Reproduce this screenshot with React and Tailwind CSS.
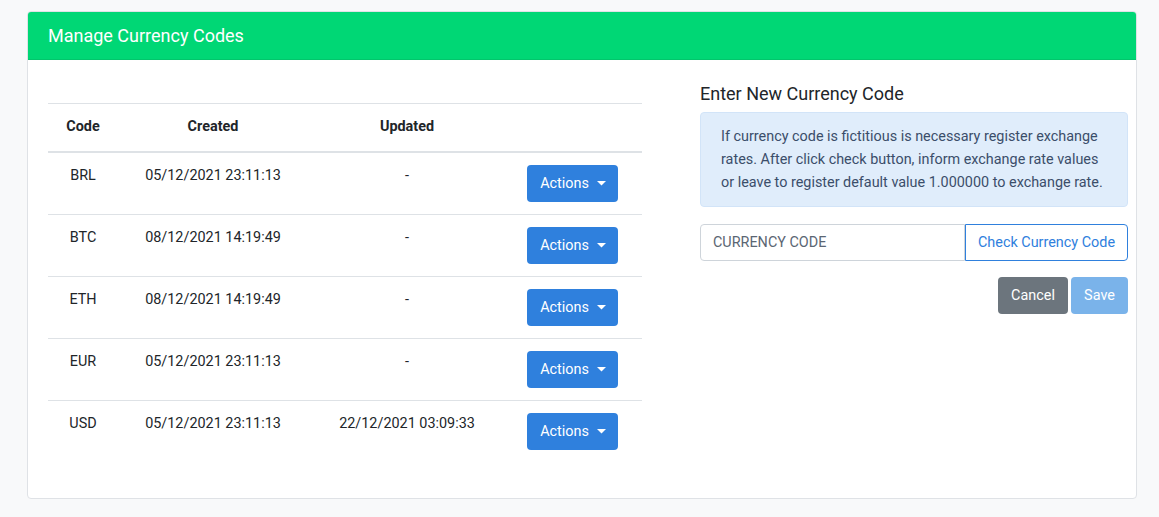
import React from "react";

const rows = [
  ["BRL", "05/12/2021 23:11:13", "-"],
  ["BTC", "08/12/2021 14:19:49", "-"],
  ["ETH", "08/12/2021 14:19:49", "-"],
  ["EUR", "05/12/2021 23:11:13", "-"],
  ["USD", "05/12/2021 23:11:13", "22/12/2021 03:09:33"],
];

function Caret() {
  return (
    <svg width="9" height="5" viewBox="0 0 9 5" className="ml-[8px]">
      <path d="M0 0 L9 0 L4.5 4.5 Z" fill="white" />
    </svg>
  );
}

export default function App() {
  return (
    <div
      className="min-h-[517px] w-full bg-[#f8f9fa] pt-[11px] pl-[27px] pr-[22px] text-[#212529]"
      style={{ fontFamily: "Roboto, 'Liberation Sans', sans-serif" }}
    >
      <div className="w-[1110px] h-[488px] bg-white border border-[#dfe2e6] rounded-[4px] overflow-hidden">
        <div className="h-[48px] bg-[#00d775] border-b border-[#02c56c] flex items-center pl-[20px]">
          <span className="text-white text-[18px] leading-none">Manage Currency Codes</span>
        </div>
        <div className="flex pl-[20px] pt-[23px]">
          <div className="w-[594px] pt-[20px]">
            <div className="grid grid-cols-[70px_190px_198px_136px] h-[50px] border-t border-[#dee2e6] border-b-2 border-b-[#dee2e6] items-center pb-[1px] text-[14.4px] font-bold">
              <div className="text-center">Code</div>
              <div className="text-center">Created</div>
              <div className="text-center">Updated</div>
              <div></div>
            </div>
            {rows.map((r, i) => (
              <div
                key={r[0]}
                className={`grid grid-cols-[70px_190px_198px_136px] h-[62px] text-[14.4px] border-b ${i < rows.length - 1 ? "border-[#dee2e6]" : "border-transparent"}`}
              >
                <div className="text-center pt-[12px] leading-[21px]">{r[0]}</div>
                <div className="text-center pt-[12px] leading-[21px]">{r[1]}</div>
                <div className="text-center pt-[12px] leading-[21px]">{r[2]}</div>
                <div className="flex items-center pl-[21px]">
                  <button className="h-[37px] w-[91px] bg-[#2f80dd] rounded-[4px] text-white text-[14.4px] flex items-center justify-center pl-[1px]">
                    Actions
                    <Caret />
                  </button>
                </div>
              </div>
            ))}
          </div>
          <div className="ml-[58px] w-[428px]">
            <div className="text-[18px] leading-[22px] text-[#212529] h-[29px]">Enter New Currency Code</div>
            <div className="bg-[#e0edfb] border border-[#d2e4f8] rounded-[4px] px-[20px] py-[12px] text-[14.4px] leading-[23px] text-[#3b4e6a]">
              If currency code is fictitious is necessary register exchange rates. After click check button, inform exchange rate values or leave to register default value 1.000000 to exchange rate.
            </div>
            <div className="mt-[17px] flex h-[37px]">
              <div className="flex-1 border border-[#ced4da] rounded-l-[4px] flex items-center pl-[12px] text-[14.4px] text-[#5b6673]">
                CURRENCY CODE
              </div>
              <button className="w-[163px] border border-[#2f80dd] rounded-r-[4px] text-[#2f80dd] text-[14.4px]">
                Check Currency Code
              </button>
            </div>
            <div className="mt-[16px] flex justify-end gap-[3px]">
              <button className="w-[70px] h-[37px] bg-[#6c757d] rounded-[4px] text-white text-[14.4px]">Cancel</button>
              <button className="w-[57px] h-[37px] bg-[#7ab3ea] rounded-[4px] text-white text-[14.4px]">Save</button>
            </div>
          </div>
        </div>
      </div>
    </div>
  );
}
